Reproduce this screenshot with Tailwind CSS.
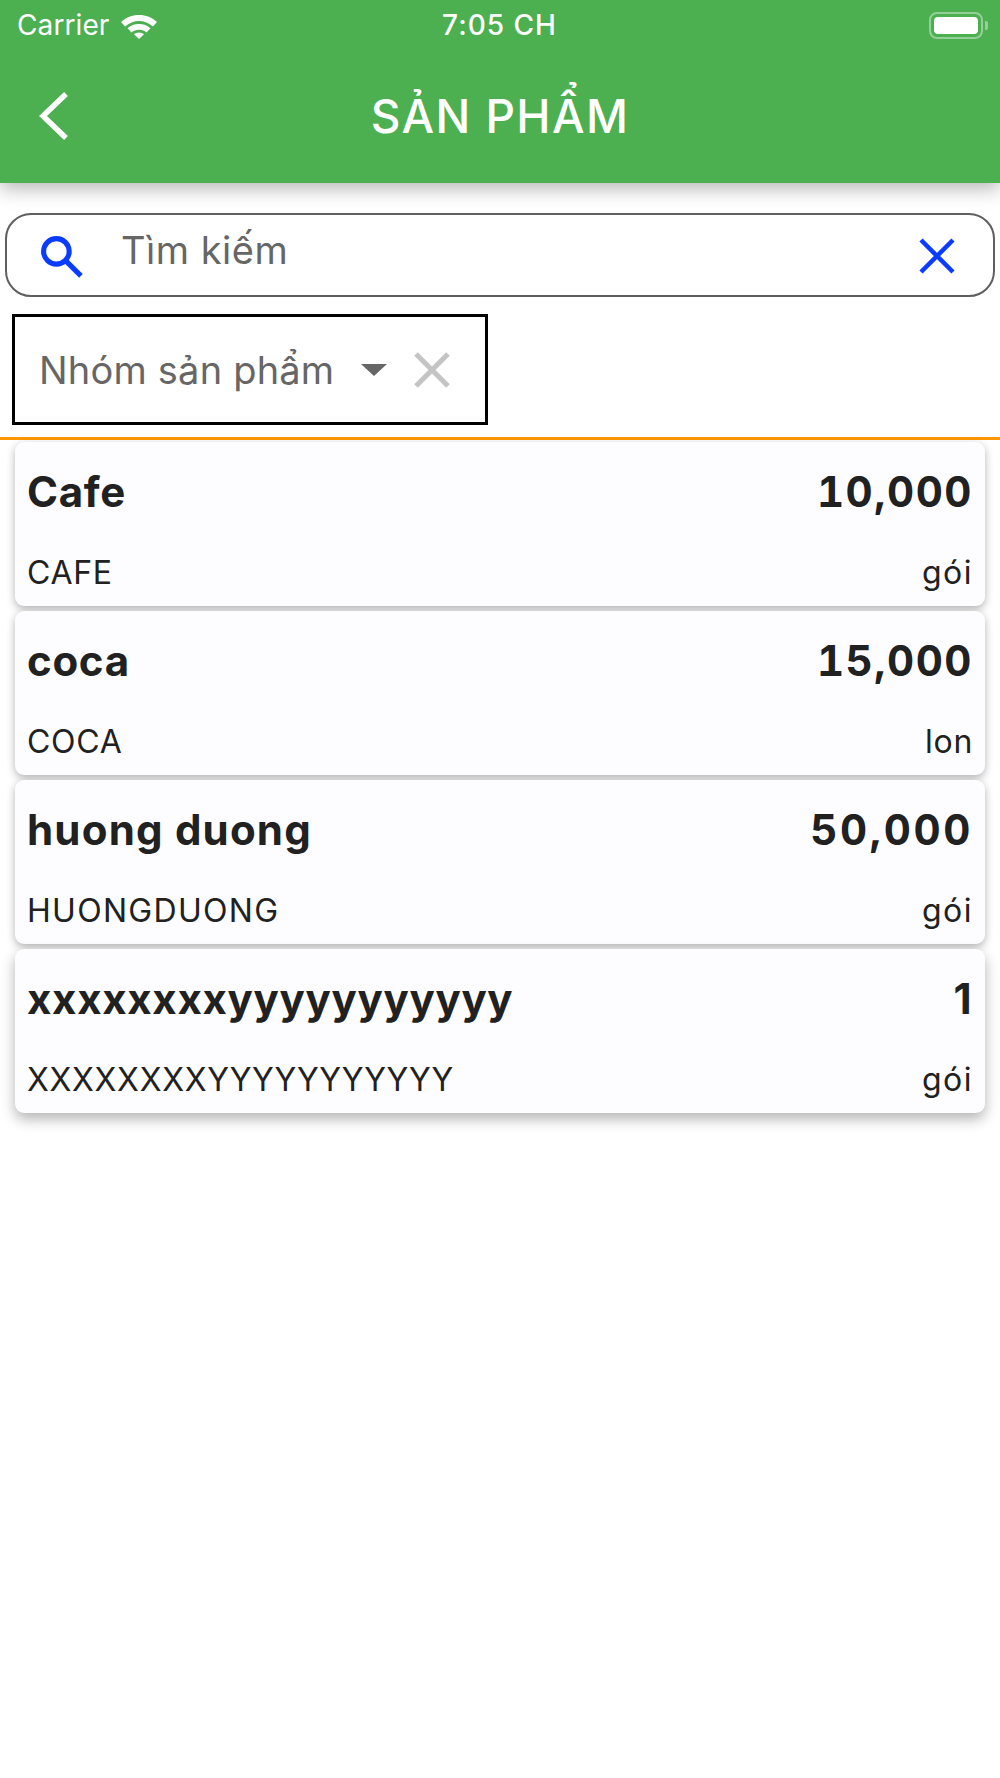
<!DOCTYPE html>
<html lang="en">

<head>
    <meta charset="UTF-8">
    <meta name="viewport" content="width=device-width, initial-scale=1.0">
    <title>Sản phẩm</title>
    <script src="https://cdn.jsdelivr.net/npm/@tailwindcss/browser@4"></script>
</head>

<body class="bg-white font-['Inter','Noto_Sans',sans-serif] w-[1000px] h-[1778px] overflow-hidden">

    <!-- header -->
    <div class="h-[183px] bg-[#4caf50] text-white shadow-[0_6px_18px_rgba(0,0,0,0.28)] relative">
        <div class="h-[50px] flex items-center justify-between pl-[17px] pr-[12px]">
            <div class="flex items-center gap-[11px] w-[300px]">
                <span class="text-[28px] leading-[50px] tracking-[0.1px]">Carrier</span>
                <svg width="38" height="28" viewBox="0 0 38 28" fill="white">
                    <path d="M19 4C12 4 6 6.6 1 11l4 4.500C9 12 14 10 19 10s10 2 14 5.500l4-4.500C32 6.600 26 4 19 4z"/>
                    <path d="M19 13c-4.500 0-8.500 1.500-11.500 4.200l4 4.300c2-1.700 4.500-2.700 7.500-2.700s5.500 1 7.500 2.700l4-4.300C27.500 14.500 23.500 13 19 13z"/>
                    <path d="M19 21.500c-2 0-3.700.7-5 1.800l5 4.700 5-4.700c-1.300-1.100-3-1.800-5-1.800z"/>
                </svg>
            </div>
            <span class="text-[28px] font-medium leading-[50px] tracking-[1px] mr-[6px]">7:05 CH</span>
            <div class="w-[300px] flex justify-end items-center">
                <div class="w-[54px] h-[27px] rounded-[8px] border-[2px] border-white/40 p-[3px]">
                    <div class="w-full h-full rounded-[4px] bg-white"></div>
                </div>
                <div class="w-[3px] h-[9px] bg-white/40 rounded-r-[2px] ml-[2px]"></div>
            </div>
        </div>
        <div class="h-[133px] flex items-center relative">
            <button class="ml-[35px] mb-[2px]">
                <svg class="block" width="34" height="50" viewBox="0 0 34 50" fill="none" stroke="white" stroke-width="5.500">
                    <path d="M31 3 L8 25 L31 47"/>
                </svg>
            </button>
            <h1 class="absolute left-0 right-0 top-[38px] text-center text-[46px] leading-[56px] font-medium tracking-[1.4px]">SẢN PHẨM</h1>
        </div>
    </div>

    <!-- search -->
    <div class="mx-[5px] mt-[30px] h-[84px] rounded-[26px] border-[2px] border-[#5f5f5f] flex items-center pl-[32px] pr-[38px]">
        <svg width="45" height="45" viewBox="0 0 44 44" fill="none" stroke="#0a3cff" stroke-width="5" class="mt-[2px]">
            <circle cx="17" cy="17" r="12.500"/>
            <path d="M26 26 L41 41"/>
        </svg>
        <span class="ml-[37px] flex-1 text-[38px] leading-[46px] text-[#666] mb-[10px] tracking-[0.5px]">Tìm kiếm</span>
        <svg width="36" height="36" viewBox="0 0 36 36" stroke="#0a3cff" stroke-width="4.500" class="mt-[2px]">
            <path d="M2 2 L34 34 M34 2 L2 34"/>
        </svg>
    </div>

    <!-- group filter -->
    <div class="ml-[12px] mt-[17px] w-[476px] h-[111px] border-[3px] border-black flex items-center pl-[24px]">
        <span class="text-[38px] leading-[46px] text-[#666] tracking-[0.2px]">Nhóm sản phẩm</span>
        <div class="ml-[27px] w-0 h-0 border-x-[13px] border-x-transparent border-t-[12px] border-t-[#666]"></div>
        <svg width="36" height="36" viewBox="0 0 36 36" stroke="#c4c4c4" stroke-width="5" class="ml-[27px]">
            <path d="M2 2 L34 34 M34 2 L2 34"/>
        </svg>
    </div>

    <div class="mt-[12px] h-[3px] bg-[#ff9800]"></div>

    <!-- list -->
    <div class="mx-[15px] mt-[2px] flex flex-col gap-[5px]">
        <div class="h-[164px] bg-[#fdfdff] rounded-[9px] shadow-[0_3px_8px_rgba(0,0,0,0.3)] px-[12px] pt-[25px]">
            <div class="flex justify-between text-[42px] leading-[50px] font-bold text-[#212121] tracking-[0.7px]"><span>Cafe</span><span class="tabular-nums tracking-[1.5px]">10,000</span></div>
            <div class="flex justify-between mt-[37px] text-[32px] leading-[38px] text-[#212121] tracking-[0.7px]"><span>CAFE</span><span class="tracking-[1.5px]">gói</span></div>
        </div>
        <div class="h-[164px] bg-[#fdfdff] rounded-[9px] shadow-[0_3px_8px_rgba(0,0,0,0.3)] px-[12px] pt-[25px]">
            <div class="flex justify-between text-[42px] leading-[50px] font-bold text-[#212121] tracking-[0.7px]"><span>coca</span><span class="tabular-nums tracking-[1.5px]">15,000</span></div>
            <div class="flex justify-between mt-[37px] text-[32px] leading-[38px] text-[#212121] tracking-[0.7px]"><span>COCA</span><span>lon</span></div>
        </div>
        <div class="h-[164px] bg-[#fdfdff] rounded-[9px] shadow-[0_3px_8px_rgba(0,0,0,0.3)] px-[12px] pt-[25px]">
            <div class="flex justify-between text-[42px] leading-[50px] font-bold text-[#212121] tracking-[0.7px]"><span class="tracking-[1.2px]">huong duong</span><span class="tabular-nums tracking-[2.6px]">50,000</span></div>
            <div class="flex justify-between mt-[37px] text-[32px] leading-[38px] text-[#212121] tracking-[0.7px]"><span class="tracking-[1.3px]">HUONGDUONG</span><span class="tracking-[1.5px]">gói</span></div>
        </div>
        <div class="h-[164px] bg-[#fdfdff] rounded-[9px] shadow-[0_6px_14px_rgba(0,0,0,0.3)] px-[12px] pt-[25px]">
            <div class="flex justify-between text-[42px] leading-[50px] font-bold text-[#212121] tracking-[0.7px]"><span>xxxxxxxxyyyyyyyyyyy</span><span class="tracking-[1.5px]">1</span></div>
            <div class="flex justify-between mt-[37px] text-[32px] leading-[38px] text-[#212121] tracking-[0.7px]"><span>XXXXXXXXYYYYYYYYYYY</span><span class="tracking-[1.5px]">gói</span></div>
        </div>
    </div>

</body>

</html>
